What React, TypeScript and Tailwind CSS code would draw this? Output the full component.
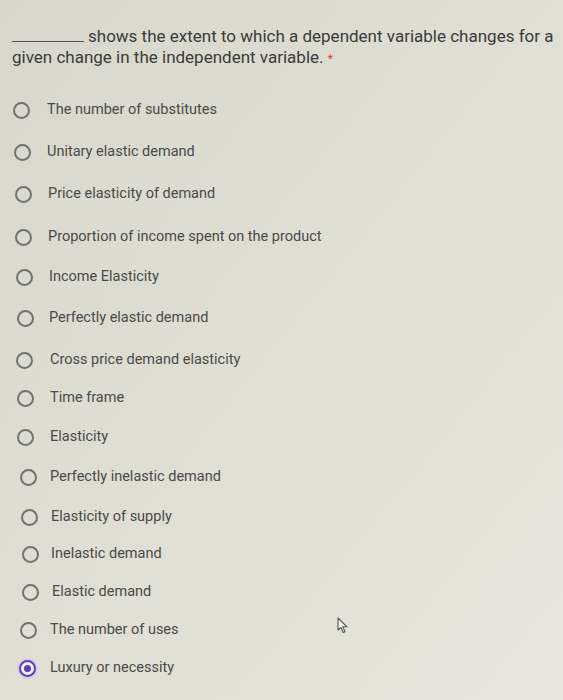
import React from "react";

type Opt = { label: string; pl: string; gap: string; mt: string; selected?: boolean };

const options: Opt[] = [
  { label: "The number of substitutes", pl: "pl-[13px]", gap: "gap-[17px]", mt: "mt-0" },
  { label: "Unitary elastic demand", pl: "pl-[14px]", gap: "gap-[16px]", mt: "mt-[22px]" },
  { label: "Price elasticity of demand", pl: "pl-[15px]", gap: "gap-[16px]", mt: "mt-[22px]" },
  { label: "Proportion of income spent on the product", pl: "pl-[15px]", gap: "gap-[16px]", mt: "mt-[23px]" },
  { label: "Income Elasticity", pl: "pl-[16px]", gap: "gap-[16px]", mt: "mt-[20px]" },
  { label: "Perfectly elastic demand", pl: "pl-[17px]", gap: "gap-[15px]", mt: "mt-[21px]" },
  { label: "Cross price demand elasticity", pl: "pl-[16px]", gap: "gap-[17px]", mt: "mt-[22px]" },
  { label: "Time frame", pl: "pl-[17px]", gap: "gap-[16px]", mt: "mt-[18px]" },
  { label: "Elasticity", pl: "pl-[17px]", gap: "gap-[16px]", mt: "mt-[19px]" },
  { label: "Perfectly inelastic demand", pl: "pl-[20px]", gap: "gap-[13px]", mt: "mt-[20px]" },
  { label: "Elasticity of supply", pl: "pl-[21px]", gap: "gap-[13px]", mt: "mt-[20px]" },
  { label: "Inelastic demand", pl: "pl-[22px]", gap: "gap-[12px]", mt: "mt-[17px]" },
  { label: "Elastic demand", pl: "pl-[22px]", gap: "gap-[13px]", mt: "mt-[18px]" },
  { label: "The number of uses", pl: "pl-[20px]", gap: "gap-[13px]", mt: "mt-[18px]" },
  { label: "Luxury or necessity", pl: "pl-[19px]", gap: "gap-[14px]", mt: "mt-[18px]", selected: true },
];

function Radio({ selected }: { selected?: boolean }) {
  if (selected) {
    return (
      <span className="flex h-[17px] w-[17px] shrink-0 items-center justify-center rounded-full border-2 border-[#5b3db5] bg-[#f1eefa] shadow-[0_0_0_2px_#d6cdee]">
        <span className="h-[7px] w-[7px] rounded-full bg-[#5b3db5]" />
      </span>
    );
  }
  return <span className="h-[17px] w-[17px] shrink-0 rounded-full border-2 border-[#72726e]" />;
}

export default function App() {
  return (
    <div className="relative h-[700px] w-[563px] overflow-hidden bg-gradient-to-br from-[#d7d8cb] via-[#dfdfd3] to-[#e7e6dc] font-['Roboto',sans-serif]">
      <div className="pl-[12px] pr-[6px] pt-[26px] text-[17px] leading-[21px] text-[#3b3b3a]">
        <span className="mr-[4px] inline-block h-px w-[72px] bg-[#555] align-baseline" />
        shows the extent to which a dependent variable changes for a given change in the independent variable.{" "}
        <span className="text-[12px] leading-none text-[#d6453a]">*</span>
      </div>
      <div className="mt-[32px] flex flex-col">
        {options.map((o) => (
          <div key={o.label} className={`flex h-5 items-center ${o.pl} ${o.gap} ${o.mt}`}>
            <Radio selected={o.selected} />
            <span className="text-[14.5px] leading-5 text-[#4a4a48]">{o.label}</span>
          </div>
        ))}
      </div>
      <svg className="absolute left-[337px] top-[617px]" width="12" height="17" viewBox="0 0 12 17">
        <path d="M1 1 L1 13 L4 10.5 L6.2 15.5 L8 14.7 L5.9 9.8 L10 9.8 Z" fill="#f2f2ee" stroke="#555" strokeWidth="1.1" strokeLinejoin="round" />
      </svg>
    </div>
  );
}
